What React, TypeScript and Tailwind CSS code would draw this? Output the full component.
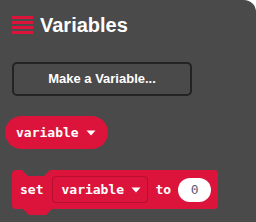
import { ReactNode } from 'react';

const Caret = () => (
    <svg width="10" height="6" viewBox="0 0 10 6" className="ml-[7px]">
        <path d="M0.5 0.5 H9.5 L5 5.5 Z" fill="#ffffff" />
    </svg>
);

const Mono = ({ children, className = '' }: { children: ReactNode; className?: string }) => (
    <span className={`font-['DejaVu_Sans_Mono',monospace] font-bold text-[13px] leading-none text-white ${className}`}>
        {children}
    </span>
);

const App = () => {
    return (
        <div className="w-[256px] h-[222px] bg-white overflow-hidden">
            <div className="w-full h-full bg-[#4a4a4a] rounded-tr-[12px] flex flex-col font-['Liberation_Sans',Arial,sans-serif]">
                {/* Header */}
                <div className="flex items-center h-6 mt-[13px] pl-3">
                    <div className="flex flex-col gap-[2px] w-[21px]">
                        <div className="h-[3px] bg-[#dc143c]" />
                        <div className="h-[3px] bg-[#dc143c]" />
                        <div className="h-[3px] bg-[#dc143c]" />
                        <div className="h-[3px] bg-[#dc143c]" />
                    </div>
                    <span className="ml-[7px] text-[20px] font-semibold text-white leading-none">Variables</span>
                </div>

                {/* Make a Variable button */}
                <div className="pl-3 mt-[25px]">
                    <div className="w-[180px] h-[34px] border-2 border-[#232323] rounded-[5px] flex items-center justify-center">
                        <span className="text-[13px] font-bold text-white">Make a Variable...</span>
                    </div>
                </div>

                {/* variable reporter */}
                <div className="pl-[5px] mt-5">
                    <div className="inline-flex items-center h-[33px] pl-[11px] pr-[12px] rounded-full bg-[#dc143c]">
                        <Mono>variable</Mono>
                        <Caret />
                    </div>
                </div>

                {/* set block */}
                <div className="pl-3 mt-[21px]">
                    <div className="relative inline-flex items-center h-[39px] pl-2 pr-[7px] bg-[#dc143c] rounded-[4px]">
                        <svg width="28" height="7" viewBox="0 0 28 7" className="absolute left-[10px] top-0">
                            <polygon points="0,0 28,0 22,6 6,6" fill="#4a4a4a" />
                        </svg>
                        <svg width="29" height="7" viewBox="0 0 29 7" className="absolute left-[11px] top-[39px]">
                            <polygon points="0,0 29,0 23,6 6,6" fill="#dc143c" />
                        </svg>
                        <Mono>set</Mono>
                        <div className="ml-[9px] h-[27px] w-[96px] flex items-center pl-2 border border-[#b5102f] rounded-[4px]">
                            <Mono>variable</Mono>
                            <Caret />
                        </div>
                        <Mono className="ml-[7px]">to</Mono>
                        <div className="ml-[7px] w-[33px] h-6 rounded-full bg-white flex items-center justify-center">
                            <span className="font-['DejaVu_Sans_Mono',monospace] text-[13px] leading-none text-[#575e75]">0</span>
                        </div>
                    </div>
                </div>
            </div>
        </div>
    );
};

export default App;
